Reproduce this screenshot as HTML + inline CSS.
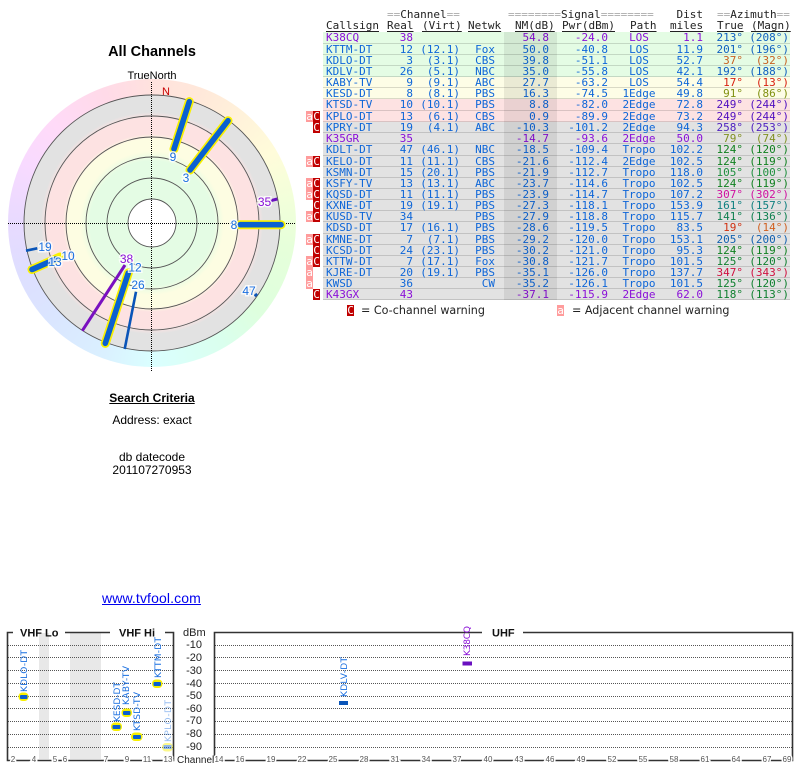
<!DOCTYPE html>
<html><head><meta charset="utf-8"><title>All Channels</title>
<style>
html,body{margin:0;padding:0;background:#fff;width:800px;height:768px;overflow:hidden}
body{position:relative;font-family:"Liberation Sans",sans-serif;color:#000}
.t{position:absolute;white-space:pre;line-height:14px}
.c{left:0;width:304px;text-align:center;font-size:12px}
#rb{position:absolute;left:8px;top:79px;width:288px;height:288px;border-radius:50%;
background:conic-gradient(#ffe2de 0deg,#ffe8da 20deg,#fff2da 40deg,#fffcda 60deg,#f2ffda 80deg,#e6ffda 100deg,#deffde 130deg,#daffee 150deg,#daffff 180deg,#daf0ff 200deg,#dae6ff 225deg,#dedeff 250deg,#e8daff 270deg,#f8daff 295deg,#ffdaf8 315deg,#ffdae8 340deg,#ffe2de 360deg)}
#rd{position:absolute;left:24px;top:95px;width:256px;height:256px;border-radius:50%;
background:radial-gradient(circle closest-side,#e4fce4 0,#e4fce4 62px,#fdfde2 72px,#fdfde2 84px,#fde2e2 89px,#fde2e2 105px,#e2e2e2 111px,#e2e2e2 128px)}
svg{position:absolute;left:0;top:0}
#tb{position:absolute;left:0;top:0;width:800px;height:320px;font:11px/11px "DejaVu Sans Mono",monospace;color:#0e66d8}
.h{position:absolute;white-space:pre;color:#222;line-height:11px;text-decoration:underline;text-decoration-thickness:1px;text-underline-offset:2px}
.h2{position:absolute;white-space:pre;color:#222;line-height:11px}
.h2 b{font-weight:normal;color:#aaa}
.r{position:absolute;left:323px;width:467px;box-shadow:inset 0 -1px 0 rgba(0,0,0,.14)}
.r span{position:absolute;top:0;white-space:pre}
.g{background:#e4fce4}.y{background:#fdfde6}.p{background:#fde2e2}.k{background:#e2e2e2}
.u{color:#8a10d8}
.r .n{left:3px}
.r .re{left:auto;right:377px}.r .vi{right:330px}.r .ne{right:295px}.r .nm{right:241px}.r .pw{right:182px}
.r .pa{left:284px;width:64px;text-align:center}.r .di{right:87px}.r .tr{right:47px}.r .ma{right:1px}
#ov{position:absolute;left:504px;top:32px;width:53px;height:268px;background:rgba(0,0,0,.075)}
.w{position:absolute;height:11px;width:7px;font:11px/11px "DejaVu Sans Mono",monospace;text-align:center;color:#fff}
.wa{background:#ff9c9c;left:306px}.wc{background:#c00000;left:313px}
.lg{position:absolute;top:304px;font:11.15px/14px "DejaVu Sans",sans-serif;color:#222;white-space:pre}
a{color:#0000ee}
</style></head><body>

<div class="t" style="left:0;width:304px;text-align:center;top:45px;font-size:14.5px;font-weight:bold">All Channels</div>
<div class="t" style="left:0;width:304px;text-align:center;top:69px;font-size:11px">TrueNorth</div>

<div id="rb"></div><div id="rd"></div>
<svg width="304" height="380" viewBox="0 0 304 380" style="width:304px;height:380px">
<g fill="none" stroke="#555" stroke-width=".9">
<circle cx="152" cy="223" r="128"/><circle cx="152" cy="223" r="107"/><circle cx="152" cy="223" r="86"/><circle cx="152" cy="223" r="66"/><circle cx="152" cy="223" r="45"/>
<circle cx="152" cy="223" r="24" fill="#fff"/></g>
<g stroke="#000" stroke-width="1" stroke-dasharray="1 1">
<path d="M8 223.5H296"/><path d="M151.5 82V372"/></g>
<g stroke-linecap="round" fill="none">
<path d="M125 265L82.3 330.7" stroke="#7a10c0" stroke-width="3" stroke-linecap="butt"/>
<path d="M136 291.7L124.7 349" stroke="#0a55b8" stroke-width="2.6" stroke-linecap="butt"/>
<path d="M26 250.7L37.3 248.3" stroke="#0a55b8" stroke-width="2.6" stroke-linecap="butt"/>
<path d="M270.7 200.7L277.3 199" stroke="#6a10c0" stroke-width="3" stroke-linecap="butt"/>
<path d="M255 294L256.7 296" stroke="#0a55b8" stroke-width="3.4" stroke-linecap="butt"/>
<g stroke="#f8f000" stroke-width="9">
<path d="M189.3 101.7L174 149"/><path d="M228 120.7L190 170"/><path d="M240 224.7H281"/><path d="M32 269.5L60 257"/><path d="M128.3 273L105.3 343.3"/></g>
<g stroke="#0a60d0" stroke-width="5.6">
<path d="M189.3 101.7L174 149"/><path d="M228 120.7L190 170"/><path d="M240 224.7H281"/><path d="M32 269.5L56 259"/><path d="M128.3 273L105.3 343.3"/></g>
</g>
<g font-family="'Liberation Sans',sans-serif" font-size="12" fill="#1a6fe0" text-anchor="middle" style="paint-order:stroke" stroke="rgba(255,255,255,.8)" stroke-width="3">
<text x="173" y="161">9</text><text x="186" y="182">3</text><text x="234" y="229">8</text>
<text x="264.5" y="206" fill="#8a10d8">35</text><text x="249" y="295">47</text>
<text x="45" y="251">19</text><text x="68" y="260">10</text><text x="55" y="266">13</text>
<text x="126.5" y="263" fill="#8a10d8">38</text><text x="135" y="271.500">12</text><text x="138" y="289">26</text>
</g>
<text x="166" y="95" font-family="'Liberation Sans',sans-serif" font-size="11" fill="#c80000" text-anchor="middle">N</text>
</svg>

<div class="t c" style="top:391px;font-weight:bold;text-decoration:underline">Search Criteria</div>
<div class="t c" style="top:413px">Address: exact</div>
<div class="t c" style="top:450px">db datecode</div>
<div class="t c" style="top:463px">201107270953</div>
<a class="t" href="#" style="left:102px;top:591px;font-size:14px;letter-spacing:.12px">www.tvfool.com</a>

<div id="tb">
<span class="h2" style="left:387px;top:9px"><b>==</b>Channel<b>==</b></span>
<span class="h2" style="left:508px;top:9px"><b>========</b>Signal<b>========</b></span>
<span class="h2" style="right:97px;top:9px">Dist</span>
<span class="h2" style="left:717px;top:9px"><b>==</b>Azimuth<b>==</b></span>
<span class="h" style="left:326px;top:20px">Callsign</span>
<span class="h" style="left:387px;top:20px">Real</span>
<span class="h" style="left:422px;top:20px">(Virt)</span>
<span class="h" style="left:468px;top:20px">Netwk</span>
<span class="h" style="left:515px;top:20px">NM(dB)</span>
<span class="h" style="left:562px;top:20px">Pwr(dBm)</span>
<span class="h" style="left:630px;top:20px">Path</span>
<span class="h" style="left:670px;top:20px">miles</span>
<span class="h" style="left:717px;top:20px">True</span>
<span class="h" style="left:751px;top:20px">(Magn)</span>

<div class="r g u" style="top:32px;height:12px"><span class="n">K38CQ</span><span class="re">38</span><span class="nm">54.8</span><span class="pw">-24.0</span><span class="pa">LOS</span><span class="di">1.1</span><span class="tr" style="color:#1060c0">213°</span><span class="ma" style="color:#1060c0">(208°)</span></div>
<div class="r g" style="top:44px;height:11px"><span class="n">KTTM-DT</span><span class="re">12</span><span class="vi">(12.1)</span><span class="ne">Fox</span><span class="nm">50.0</span><span class="pw">-40.8</span><span class="pa">LOS</span><span class="di">11.9</span><span class="tr" style="color:#1060c0">201°</span><span class="ma" style="color:#1060c0">(196°)</span></div>
<div class="r g" style="top:55px;height:11px"><span class="n">KDLO-DT</span><span class="re">3</span><span class="vi">(3.1)</span><span class="ne">CBS</span><span class="nm">39.8</span><span class="pw">-51.1</span><span class="pa">LOS</span><span class="di">52.7</span><span class="tr" style="color:#c86020">37°</span><span class="ma" style="color:#c86020">(32°)</span></div>
<div class="r g" style="top:66px;height:11px"><span class="n">KDLV-DT</span><span class="re">26</span><span class="vi">(5.1)</span><span class="ne">NBC</span><span class="nm">35.0</span><span class="pw">-55.8</span><span class="pa">LOS</span><span class="di">42.1</span><span class="tr" style="color:#1060c0">192°</span><span class="ma" style="color:#1060c0">(188°)</span></div>
<div class="r y" style="top:77px;height:11px"><span class="n">KABY-TV</span><span class="re">9</span><span class="vi">(9.1)</span><span class="ne">ABC</span><span class="nm">27.7</span><span class="pw">-63.2</span><span class="pa">LOS</span><span class="di">54.4</span><span class="tr" style="color:#d82010">17°</span><span class="ma" style="color:#d82010">(13°)</span></div>
<div class="r y" style="top:88px;height:11px"><span class="n">KESD-DT</span><span class="re">8</span><span class="vi">(8.1)</span><span class="ne">PBS</span><span class="nm">16.3</span><span class="pw">-74.5</span><span class="pa">1Edge</span><span class="di">49.8</span><span class="tr" style="color:#809010">91°</span><span class="ma" style="color:#809010">(86°)</span></div>
<div class="r p" style="top:99px;height:12px"><span class="n">KTSD-TV</span><span class="re">10</span><span class="vi">(10.1)</span><span class="ne">PBS</span><span class="nm">8.8</span><span class="pw">-82.0</span><span class="pa">2Edge</span><span class="di">72.8</span><span class="tr" style="color:#5010c0">249°</span><span class="ma" style="color:#5010c0">(244°)</span></div>
<div class="r p" style="top:111px;height:11px"><span class="n">KPLO-DT</span><span class="re">13</span><span class="vi">(6.1)</span><span class="ne">CBS</span><span class="nm">0.9</span><span class="pw">-89.9</span><span class="pa">2Edge</span><span class="di">73.2</span><span class="tr" style="color:#5010c0">249°</span><span class="ma" style="color:#5010c0">(244°)</span></div>
<div class="r k" style="top:122px;height:11px"><span class="n">KPRY-DT</span><span class="re">19</span><span class="vi">(4.1)</span><span class="ne">ABC</span><span class="nm">-10.3</span><span class="pw">-101.2</span><span class="pa">2Edge</span><span class="di">94.3</span><span class="tr" style="color:#5020c0">258°</span><span class="ma" style="color:#5020c0">(253°)</span></div>
<div class="r k u" style="top:133px;height:11px"><span class="n">K35GR</span><span class="re">35</span><span class="nm">-14.7</span><span class="pw">-93.6</span><span class="pa">2Edge</span><span class="di">50.0</span><span class="tr" style="color:#809020">79°</span><span class="ma" style="color:#809020">(74°)</span></div>
<div class="r k" style="top:144px;height:12px"><span class="n">KDLT-DT</span><span class="re">47</span><span class="vi">(46.1)</span><span class="ne">NBC</span><span class="nm">-18.5</span><span class="pw">-109.4</span><span class="pa">Tropo</span><span class="di">102.2</span><span class="tr" style="color:#108020">124°</span><span class="ma" style="color:#108020">(120°)</span></div>
<div class="r k" style="top:156px;height:11px"><span class="n">KELO-DT</span><span class="re">11</span><span class="vi">(11.1)</span><span class="ne">CBS</span><span class="nm">-21.6</span><span class="pw">-112.4</span><span class="pa">2Edge</span><span class="di">102.5</span><span class="tr" style="color:#108020">124°</span><span class="ma" style="color:#108020">(119°)</span></div>
<div class="r k" style="top:167px;height:11px"><span class="n">KSMN-DT</span><span class="re">15</span><span class="vi">(20.1)</span><span class="ne">PBS</span><span class="nm">-21.9</span><span class="pw">-112.7</span><span class="pa">Tropo</span><span class="di">118.0</span><span class="tr" style="color:#209040">105°</span><span class="ma" style="color:#209040">(100°)</span></div>
<div class="r k" style="top:178px;height:11px"><span class="n">KSFY-TV</span><span class="re">13</span><span class="vi">(13.1)</span><span class="ne">ABC</span><span class="nm">-23.7</span><span class="pw">-114.6</span><span class="pa">Tropo</span><span class="di">102.5</span><span class="tr" style="color:#108020">124°</span><span class="ma" style="color:#108020">(119°)</span></div>
<div class="r k" style="top:189px;height:11px"><span class="n">KQSD-DT</span><span class="re">11</span><span class="vi">(11.1)</span><span class="ne">PBS</span><span class="nm">-23.9</span><span class="pw">-114.7</span><span class="pa">Tropo</span><span class="di">107.2</span><span class="tr" style="color:#d010a0">307°</span><span class="ma" style="color:#d010a0">(302°)</span></div>
<div class="r k" style="top:200px;height:11px"><span class="n">KXNE-DT</span><span class="re">19</span><span class="vi">(19.1)</span><span class="ne">PBS</span><span class="nm">-27.3</span><span class="pw">-118.1</span><span class="pa">Tropo</span><span class="di">153.9</span><span class="tr" style="color:#108080">161°</span><span class="ma" style="color:#108080">(157°)</span></div>
<div class="r k" style="top:211px;height:11px"><span class="n">KUSD-TV</span><span class="re">34</span><span class="ne">PBS</span><span class="nm">-27.9</span><span class="pw">-118.8</span><span class="pa">Tropo</span><span class="di">115.7</span><span class="tr" style="color:#108050">141°</span><span class="ma" style="color:#108050">(136°)</span></div>
<div class="r k" style="top:222px;height:12px"><span class="n">KDSD-DT</span><span class="re">17</span><span class="vi">(16.1)</span><span class="ne">PBS</span><span class="nm">-28.6</span><span class="pw">-119.5</span><span class="pa">Tropo</span><span class="di">83.5</span><span class="tr" style="color:#d03010">19°</span><span class="ma" style="color:#d06020">(14°)</span></div>
<div class="r k" style="top:234px;height:11px"><span class="n">KMNE-DT</span><span class="re">7</span><span class="vi">(7.1)</span><span class="ne">PBS</span><span class="nm">-29.2</span><span class="pw">-120.0</span><span class="pa">Tropo</span><span class="di">153.1</span><span class="tr" style="color:#1060b0">205°</span><span class="ma" style="color:#1060b0">(200°)</span></div>
<div class="r k" style="top:245px;height:11px"><span class="n">KCSD-DT</span><span class="re">24</span><span class="vi">(23.1)</span><span class="ne">PBS</span><span class="nm">-30.2</span><span class="pw">-121.0</span><span class="pa">Tropo</span><span class="di">95.3</span><span class="tr" style="color:#108020">124°</span><span class="ma" style="color:#108020">(119°)</span></div>
<div class="r k" style="top:256px;height:11px"><span class="n">KTTW-DT</span><span class="re">7</span><span class="vi">(17.1)</span><span class="ne">Fox</span><span class="nm">-30.8</span><span class="pw">-121.7</span><span class="pa">Tropo</span><span class="di">101.5</span><span class="tr" style="color:#108030">125°</span><span class="ma" style="color:#108030">(120°)</span></div>
<div class="r k" style="top:267px;height:11px"><span class="n">KJRE-DT</span><span class="re">20</span><span class="vi">(19.1)</span><span class="ne">PBS</span><span class="nm">-35.1</span><span class="pw">-126.0</span><span class="pa">Tropo</span><span class="di">137.7</span><span class="tr" style="color:#d01040">347°</span><span class="ma" style="color:#d01040">(343°)</span></div>
<div class="r k" style="top:278px;height:11px"><span class="n">KWSD</span><span class="re">36</span><span class="ne">CW</span><span class="nm">-35.2</span><span class="pw">-126.1</span><span class="pa">Tropo</span><span class="di">101.5</span><span class="tr" style="color:#108030">125°</span><span class="ma" style="color:#108030">(120°)</span></div>
<div class="r k u" style="top:289px;height:11px"><span class="n">K43GX</span><span class="re">43</span><span class="nm">-37.1</span><span class="pw">-115.9</span><span class="pa">2Edge</span><span class="di">62.0</span><span class="tr" style="color:#108030">118°</span><span class="ma" style="color:#108030">(113°)</span></div>
<div id="ov"></div>

<span class="w wa" style="top:111px">a</span><span class="w wc" style="top:111px">C</span>
<span class="w wc" style="top:122px">C</span>
<span class="w wa" style="top:156px">a</span><span class="w wc" style="top:156px">C</span>
<span class="w wa" style="top:178px">a</span><span class="w wc" style="top:178px">C</span>
<span class="w wa" style="top:189px">a</span><span class="w wc" style="top:189px">C</span>
<span class="w wc" style="top:200px">C</span>
<span class="w wa" style="top:211px">a</span><span class="w wc" style="top:211px">C</span>
<span class="w wa" style="top:234px">a</span><span class="w wc" style="top:234px">C</span>
<span class="w wc" style="top:245px">C</span>
<span class="w wa" style="top:256px">a</span><span class="w wc" style="top:256px">C</span>
<span class="w wa" style="top:267px">a</span>
<span class="w wa" style="top:278px">a</span>
<span class="w wc" style="top:289px">C</span>

<span class="w wc" style="top:305px;left:347px">C</span><span class="lg" style="left:361px">= Co-channel warning</span>
<span class="w wa" style="top:305px;left:557px">a</span><span class="lg" style="left:572px">= Adjacent channel warning</span>
</div>

<svg width="800" height="768" viewBox="0 0 800 768" style="width:800px;height:768px;pointer-events:none">
<rect x="39" y="633" width="10" height="126" fill="#e8e8e8"/>
<rect x="70" y="633" width="31" height="126" fill="#e8e8e8"/>
<g stroke="#555" stroke-width="1" stroke-dasharray="1 1">
<path d="M8 645.500H173M8 657.500H173M8 670.500H173M8 683.500H173M8 696.500H173M8 708.500H173M8 721.500H173M8 734.500H173M8 747.500H173"/>
<path d="M215 645.500H792M215 657.500H792M215 670.500H792M215 683.500H792M215 696.500H792M215 708.500H792M215 721.500H792M215 734.500H792M215 747.500H792"/>
</g>
<g fill="none" stroke="#333" stroke-width="1.6">
<path d="M13 632.500H7.500V760.500H173.500V632.500H165"/><path d="M65 632.500H110"/>
<path d="M482 632.500H214.500V760.500H792.500V632.500H523"/></g>
<g font-family="'Liberation Sans',sans-serif" font-size="8" fill="#555" text-anchor="middle" style="paint-order:stroke" stroke="#fff" stroke-width="3">
<text x="13" y="762">2</text><text x="34" y="762">4</text><text x="55" y="762">5</text><text x="65" y="762">6</text><text x="106" y="762">7</text><text x="127" y="762">9</text><text x="147" y="762">11</text><text x="168" y="762">13</text>
<text x="219" y="762">14</text><text x="240" y="762">16</text><text x="271" y="762">19</text><text x="302" y="762">22</text><text x="333" y="762">25</text><text x="364" y="762">28</text><text x="395" y="762">31</text><text x="426" y="762">34</text><text x="457" y="762">37</text><text x="488" y="762">40</text><text x="519" y="762">43</text><text x="550" y="762">46</text><text x="581" y="762">49</text><text x="612" y="762">52</text><text x="643" y="762">55</text><text x="674" y="762">58</text><text x="705" y="762">61</text><text x="736" y="762">64</text><text x="767" y="762">67</text><text x="787" y="762">69</text>
</g>
<g font-family="'Liberation Sans',sans-serif" font-size="11" font-weight="bold" fill="#111">
<text x="20" y="636.500">VHF Lo</text><text x="119" y="636.500">VHF Hi</text><text x="492" y="636.500">UHF</text></g>
<g font-family="'Liberation Sans',sans-serif" font-size="11" fill="#222">
<text x="183" y="636">dBm</text><text x="177" y="763" font-size="10">Channel</text>
<g text-anchor="end"><text x="202" y="648">-10</text><text x="202" y="661">-20</text><text x="202" y="674">-30</text><text x="202" y="687">-40</text><text x="202" y="699">-50</text><text x="202" y="712">-60</text><text x="202" y="724">-70</text><text x="202" y="737">-80</text><text x="202" y="750">-90</text></g></g>
<g fill="#f8f000">
<rect x="18.500" y="692.500" width="10" height="8.500" rx="4"/><rect x="111" y="722.500" width="11" height="8.500" rx="4"/><rect x="121.500" y="708.500" width="10.500" height="8.500" rx="4"/><rect x="131" y="732.500" width="11.500" height="8.500" rx="4"/><rect x="152" y="679.500" width="10.500" height="8.500" rx="4"/></g>
<g fill="#0a60d0"><rect x="20" y="695" width="7.500" height="4" rx="1"/><rect x="112.500" y="725" width="8" height="4" rx="1"/><rect x="123" y="711" width="7.500" height="4" rx="1"/><rect x="133" y="735" width="8" height="4" rx="1"/><rect x="153.500" y="682" width="7.500" height="4" rx="1"/></g>
<g opacity=".45"><rect x="162" y="743" width="11" height="8.500" rx="4" fill="#f8f000"/><rect x="163.500" y="745" width="8" height="4" fill="#0a60d0"/></g>
<rect x="339" y="701" width="9" height="4" fill="#0a55b8"/><rect x="462.500" y="661.500" width="9.500" height="4" fill="#6a10c0"/>
<g font-family="'DejaVu Sans',sans-serif" font-size="9" fill="#1a6fe0">
<text transform="translate(27 692) rotate(-90)" textLength="42">KDLO-DT</text>
<text transform="translate(120 722) rotate(-90)" textLength="40">KESD-DT</text>
<text transform="translate(129 705) rotate(-90)" textLength="39">KABY-TV</text>
<text transform="translate(140 731) rotate(-90)" textLength="39">KTSD-TV</text>
<text transform="translate(161 678) rotate(-90)" textLength="41">KTTM-DT</text>
<text transform="translate(171 742) rotate(-90)" textLength="42" opacity=".45">KPLO-DT</text>
<text transform="translate(347 697) rotate(-90)" textLength="40">KDLV-DT</text>
<text transform="translate(470 656) rotate(-90)" textLength="30" fill="#8a10d8">K38CQ</text>
</g>
</svg>
</body></html>
